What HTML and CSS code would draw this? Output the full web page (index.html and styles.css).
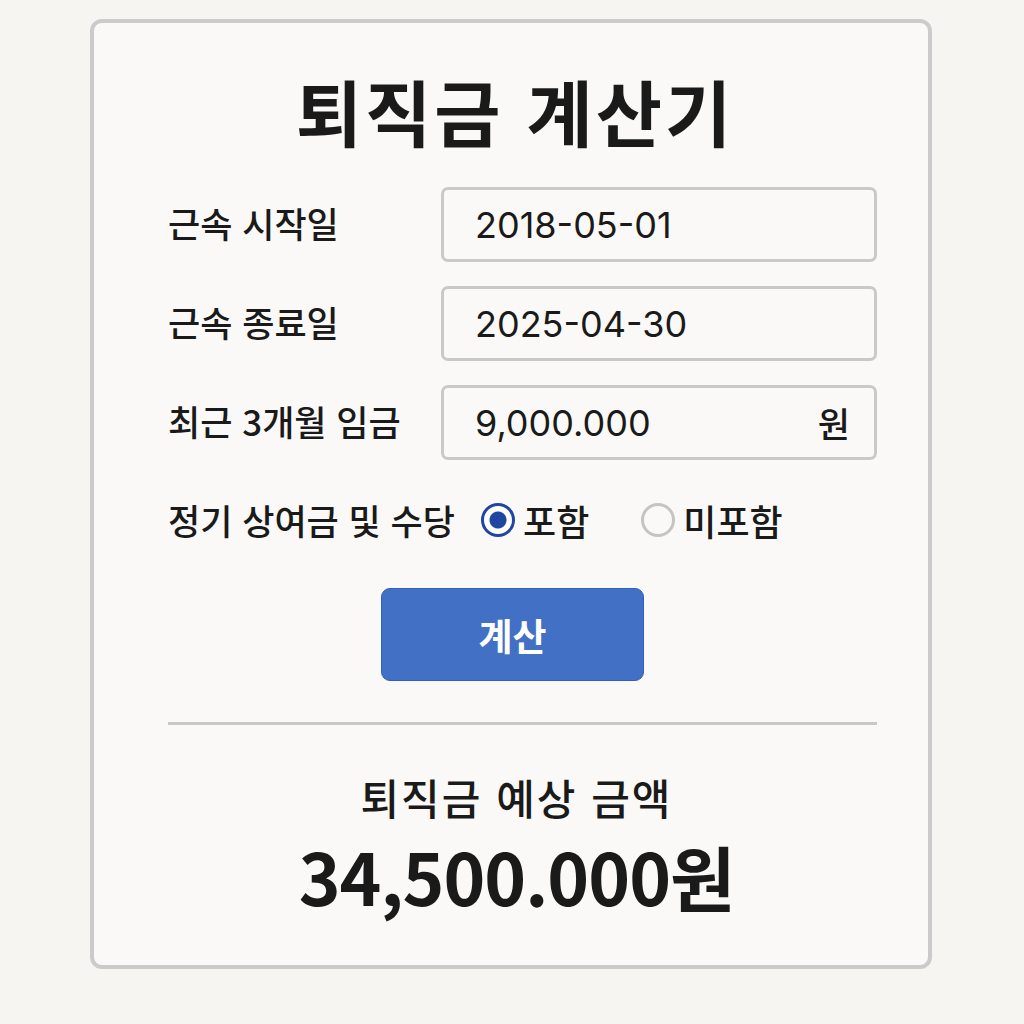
FILE: index.html
```html
<!DOCTYPE html>
<html lang="ko">
<head>
    <meta charset="UTF-8" />
    <title>퇴직금 계산기</title>
    <link rel="stylesheet" href="styles.css">
</head>
<body>
    <div class="card">
        <h1 class="title">퇴직금 계산기</h1>

        <!-- 입력 폼 -->
        <form class="form">
            <label class="label" for="start_date">근속 시작일</label>
            <div class="field"><input id="start_date" type="text" value="2018-05-01"></div>

            <label class="label" for="end_date">근속 종료일</label>
            <div class="field"><input id="end_date" type="text" value="2025-04-30"></div>

            <label class="label" for="wage">최근 3개월 임금</label>
            <div class="field"><input id="wage" type="text" value="9,000.000"><span class="unit">원</span></div>

            <div class="radio-row">
                <span class="label">정기 상여금 및 수당</span>
                <label class="radio"><span class="dot checked"></span>포함</label>
                <label class="radio"><span class="dot"></span>미포함</label>
            </div>
        </form>

        <button type="button" class="calc-button">계산</button>

        <hr class="divider">

        <div class="result">
            <p class="result-label">퇴직금 예상 금액</p>
            <p class="result-value">34,500.000원</p>
        </div>
    </div>
</body>
</html>
```

FILE: styles.css
```css
body {
    margin: 0;
    background: #f6f5f2;
    font-family: "Noto Sans CJK KR", "Noto Sans", sans-serif;
    color: #1a1a1a;
}

.card {
    box-sizing: border-box;
    width: 842px;
    height: 950px;
    margin: 19px 0 0 90px;
    padding: 0 51px 0 74px;
    background: #faf9f7;
    border: 4px solid #cbcbcb;
    border-radius: 12px;
}

.title {
    margin: 44px 0 0 -15px;
    font-size: 72px;
    line-height: 1.2;
    font-weight: 700;
    text-align: center;
    letter-spacing: 3px;
}

.form {
    display: grid;
    grid-template-columns: 273px 436px;
    grid-auto-rows: 75px;
    row-gap: 24px;
    align-items: center;
    margin-top: 34px;
}

.label {
    font-size: 35px;
    font-weight: 500;
    margin-top: -4px;
    white-space: nowrap;
}

.field {
    box-sizing: border-box;
    height: 75px;
    display: flex;
    align-items: center;
    padding: 0 24px 0 31px;
    border: 3px solid #c9c9c9;
    border-radius: 7px;
    background: #faf9f7;
}

.field input {
    flex: 1;
    min-width: 0;
    border: none;
    background: transparent;
    font-family: Inter, "Noto Sans CJK KR", sans-serif;
    font-size: 36px;
    color: #1a1a1a;
    padding: 0;
    outline: none;
}

.unit {
    font-size: 35px;
    font-weight: 500;
}

.radio-row {
    grid-column: 1 / -1;
    display: flex;
    align-items: center;
}

.radio-row .label {
    margin-right: 26px;
}

.radio {
    display: flex;
    align-items: center;
    gap: 8px;
    margin-right: 52px;
    margin-top: -4px;
    font-size: 36px;
    font-weight: 500;
}

.dot {
    box-sizing: border-box;
    width: 34px;
    height: 34px;
    border-radius: 50%;
    border: 3px solid #c4c4c4;
    background: #faf9f7;
}

.dot.checked {
    border: 3px solid #1f46a0;
    background: radial-gradient(circle, #1f46a0 0 8px, #ffffff 9px);
}

.calc-button {
    display: block;
    width: 263px;
    height: 93px;
    margin: 29px auto 0;
    position: relative;
    left: -10px;
    background: #4270c4;
    border: 1px solid #2f5fc0;
    border-radius: 9px;
    color: #fff;
    font-family: inherit;
    font-size: 37px;
    font-weight: 700;
}

.divider {
    margin: 41px 0 0;
    border: none;
    border-top: 3px solid #c8c8c8;
}

.result {
    text-align: center;
    margin-left: -12px;
}

.result-label {
    margin: 51px 0 0;
    font-size: 42px;
    font-weight: 500;
    line-height: 1;
    letter-spacing: 2px;
}

.result-value {
    margin: 22px 0 0;
    font-size: 71px;
    font-weight: 700;
    line-height: 1;
    letter-spacing: -1px;
}
```
